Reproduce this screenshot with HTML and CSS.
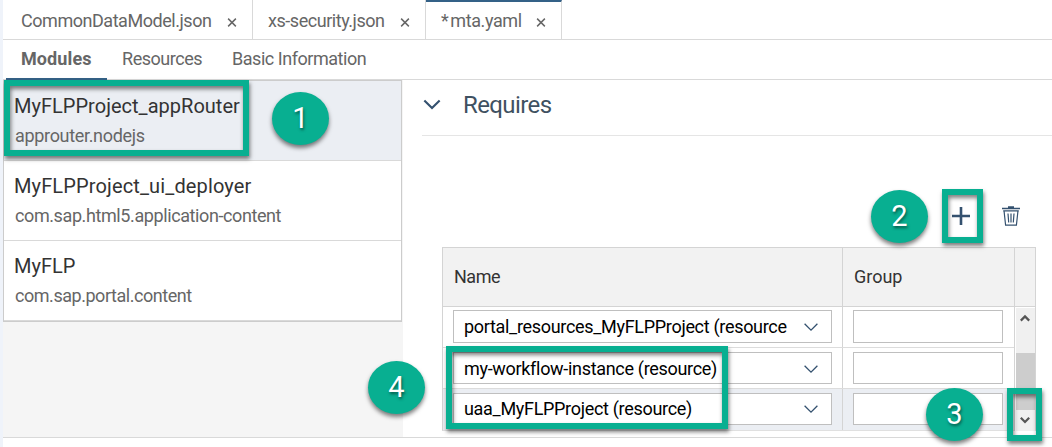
FILE: index.html
```html
<!DOCTYPE html>
<html lang="en">
<head>
<meta charset="utf-8">
<title>mta.yaml</title>
<link rel="stylesheet" href="styles.css">
</head>
<body>
<div class="app">
  <div class="tabs">
    <div class="tab tab-model"><span class="t-model">CommonDataModel.json</span><svg class="close" viewBox="0 0 10 10"><path d="M.7.7 9.3 9.3M9.3.7.7 9.3"/></svg></div>
    <div class="tab tab-security"><span class="t-security">xs-security.json</span><svg class="close" viewBox="0 0 10 10"><path d="M.7.7 9.3 9.3M9.3.7.7 9.3"/></svg></div>
    <div class="tab tab-mta"><span class="t-mta"><span class="star">*</span>mta.yaml</span><svg class="close" viewBox="0 0 10 10"><path d="M.7.7 9.3 9.3M9.3.7.7 9.3"/></svg></div>
  </div>
  <nav class="nav">
    <div class="nav-item active"><span class="t-modules">Modules</span></div>
    <div class="nav-item"><span class="t-resources">Resources</span></div>
    <div class="nav-item"><span class="t-basic">Basic Information</span></div>
  </nav>
  <main class="main">
    <aside class="side">
      <ul class="list">
        <li class="item selected"><span class="title t-router">MyFLPProject_appRouter</span><span class="sub t-nodejs">approuter.nodejs</span></li>
        <li class="item"><span class="title t-deployer">MyFLPProject_ui_deployer</span><span class="sub t-html5">com.sap.html5.application-content</span></li>
        <li class="item"><span class="title t-flp">MyFLP</span><span class="sub t-portal">com.sap.portal.content</span></li>
      </ul>
    </aside>
    <section class="detail">
      <header class="section-head">
        <svg class="toggle" viewBox="0 0 20 12"><path d="M1.5 1.5 10 9.8 18.5 1.5"/></svg>
        <h2 class="t-requires">Requires</h2>
      </header>
      <div class="toolbar">
        <svg class="plus" viewBox="0 0 18 18"><path d="M9 0v18M0 9h18"/></svg>
        <svg class="trash" viewBox="0 0 18 20"><path class="lid" d="M0 2.5h18M6 1h6"/><path d="M2 4.5 3.6 19.2h10.8L16 4.5M1.2 4.8h15.6M6 7.5l.7 9M9 7.5v9M12 7.5l-.7 9"/></svg>
      </div>
      <div class="table">
        <div class="grid head">
          <div class="cell"><span class="t-name">Name</span></div><div class="cell"><span class="t-group">Group</span></div><div class="cell"></div>
        </div>
        <div class="body">
          <div class="rows">
            <div class="row first">
              <div class="cell"><div class="field"><span class="t-value">portal_resources_MyFLPProject (resource</span><svg class="arrow" viewBox="0 0 14 9"><path d="M.6.8 7 7.2 13.4.8"/></svg></div></div>
              <div class="cell"><div class="field"></div></div>
            </div>
            <div class="row">
              <div class="cell"><div class="field"><span class="t-value">my-workflow-instance (resource)</span><svg class="arrow" viewBox="0 0 14 9"><path d="M.6.8 7 7.2 13.4.8"/></svg></div></div>
              <div class="cell"><div class="field"></div></div>
            </div>
            <div class="row current">
              <div class="cell"><div class="field"><span class="t-value">uaa_MyFLPProject (resource)</span><svg class="arrow" viewBox="0 0 14 9"><path d="M.6.8 7 7.2 13.4.8"/></svg></div></div>
              <div class="cell"><div class="field"></div></div>
            </div>
          </div>
          <div class="scroll">
            <div class="btn up"><svg viewBox="0 0 10 8"><path d="M.8 6.6 5 2.4l4.2 4.2"/></svg></div>
            <div class="thumb"></div>
            <div class="btn down"><svg viewBox="0 0 10 8"><path d="M.8 1.8 5 6l4.2-4.2"/></svg></div>
          </div>
        </div>
      </div>
    </section>
  </main>
  <div class="frame frame-1"></div><div class="badge badge-1">1</div>
  <div class="frame frame-2"></div><div class="badge badge-2">2</div>
  <div class="frame frame-3"></div><div class="badge badge-3">3</div>
  <div class="frame frame-4"></div><div class="badge badge-4">4</div>
</div>
</body>
</html>
```
FILE: styles.css
```css
* { box-sizing: border-box; }
body { margin: 0; background: #fff; font-family: Roboto, "Liberation Sans", sans-serif; font-size: 18px; color: #666; }
svg { display: block; flex: none; fill: none; overflow: visible; }
span, h2 { white-space: nowrap; }
.app { position: relative; width: 1052px; height: 447px; overflow: hidden; border-left: 3px solid #eff3fa; }

.tabs { display: flex; height: 40px; border-bottom: 1px solid #d9d9d9; }
.tab { display: flex; align-items: center; justify-content: space-between; border-right: 1px solid #d9d9d9; padding: 2px 15px 0 18px; }
.tab-model { width: 250px; }
.tab-security { width: 173px; padding-left: 15px; }
.tab-mta { width: 136px; padding: 0 15px 0; border-top: 2px solid #346187; }
.close { width: 10px; height: 9px; margin-top: 4px; stroke: #666; stroke-width: 1.6; }
.star { margin-right: 2px; }

.nav { display: flex; height: 40px; border-bottom: 1px solid #d9d9d9; padding-left: 3px; }
.nav-item { height: 40px; line-height: 38px; padding: 0 15px; }
.active { width: 101px; font-weight: 700; border-bottom: 2px solid #346187; margin-bottom: -1px; }
.nav-item + .nav-item { width: 110px; }

.main { display: flex; height: 358px; border-bottom: 1px solid #d9d9d9; }
.side { width: 400px; background: #f5f5f5; }
.list { list-style: none; width: 399px; margin: 0; padding: 0; border: 1px solid #ccc; background: #fff; }
.item { display: flex; flex-direction: column; height: 80px; padding: 11px 0 0 10px; border-bottom: 1px solid #d9d9d9; }
.selected { background: #ebeef3; }
.title { font-size: 20px; line-height: 28px; color: #333; }
.sub { line-height: 30px; padding: 1px 0 0 1px; }

.detail { flex: 1; padding-left: 19px; }
.section-head { display: flex; align-items: center; height: 56px; padding-bottom: 6px; border-bottom: 1px solid #e5e5e5; }
.toggle { width: 18px; height: 11px; margin-left: 1px; stroke: #34516f; stroke-width: 2.4; }
.section-head h2 { margin: 0 0 0 22px; font-size: 24px; font-weight: 400; color: #3f5161; }
.toolbar { display: flex; align-items: flex-start; height: 111px; padding: 70px 0 0 530px; }
.plus { width: 18px; height: 18px; margin-top: 1px; stroke: #34516f; stroke-width: 2.6; }
.trash { width: 18px; height: 20px; margin-left: 32px; stroke: #34516f; stroke-width: 1.2; }
.lid { stroke-width: 1.6; }

.t-model, .t-security, .t-resources, .t-basic, .t-portal { letter-spacing: -.46px; }
.t-mta { letter-spacing: -.4px; }
.t-modules { letter-spacing: .1px; }
.t-router { letter-spacing: .02px; }
.t-deployer { letter-spacing: .13px; }
.t-html5 { letter-spacing: -.4px; }
.t-nodejs { letter-spacing: -.32px; }
.t-requires { letter-spacing: -.6px; }
.t-name { letter-spacing: -.5px; }
.t-value { letter-spacing: -.31px; }

.table { width: 594px; height: 184px; margin-left: 20px; border: 1px solid #d4d4d4; border-bottom-color: #e0e0e0; }
.grid { display: grid; grid-template-columns: 399px 172px 1fr; }
.head { height: 59px; background: #f2f2f2; border-bottom: 1px solid #d4d4d4; }
.head .cell { line-height: 58px; padding-left: 11px; border-left: 1px solid #d4d4d4; color: #333; }
.head .cell:first-child { border-left: 0; }
.body { display: flex; height: 124px; }
.rows { width: 571px; }
.row { display: grid; grid-template-columns: 399px 1fr; height: 41px; border-bottom: 1px solid #dcdcdc; }
.row .cell { padding: 4px 10px; }
.row .cell + .cell { padding-right: 11px; border-left: 1px solid #d4d4d4; }
.row.first .cell { padding-top: 3px; }
.current { background: #ebeef3; border-bottom: 0; }
.field { display: flex; align-items: center; justify-content: space-between; height: 32px; border: 1px solid #bfbfbf; background: #fff; padding: 0 13px 0 10px; color: #000; }
.first .field { height: 33px; }
.current .field { padding-bottom: 2px; }
.arrow { width: 14px; height: 9px; margin-top: 2px; stroke: #34516f; stroke-width: 1.3; }
.scroll { display: flex; flex-direction: column; width: 21px; border-left: 1px solid #d4d4d4; padding: 1px 0 0 1px; background: #fff; }
.btn { display: flex; justify-content: center; padding-right: 1px; background: #f0f0f0; }
.btn svg { width: 10px; height: 8px; stroke: #555; stroke-width: 2.2; }
.up { height: 45px; padding-top: 6px; }
.thumb { height: 57px; background: #cdcdcd; }
.down { flex: 1; padding-top: 6px; }

/* Numbered step annotations over the page */
.frame { position: absolute; border: 6px solid #08af91; box-shadow: 1px 3px 4px rgba(0,0,0,.5), inset 1px 3px 4px rgba(0,0,0,.5); }
.badge { position: absolute; width: 57px; height: 53px; border-radius: 50%; background: #08af91; color: #fff; font-size: 29px; line-height: 52px; text-align: center; box-shadow: 0 3px 4px rgba(0,0,0,.5); text-shadow: 1px 2px 3px rgba(0,0,0,.5); }
.frame-1 { left: 1px; top: 80px; width: 245px; height: 76px; }
.frame-2 { left: 939px; top: 189px; width: 41px; height: 54px; }
.frame-3 { left: 1004px; top: 388px; width: 35px; height: 53px; }
.frame-4 { left: 443px; top: 346px; width: 282px; height: 83px; }
.badge-1 { left: 269px; top: 92px; }
.badge-2 { left: 868px; top: 190px; }
.badge-3 { left: 923px; top: 388px; }
.badge-4 { left: 365px; top: 361px; }
```
